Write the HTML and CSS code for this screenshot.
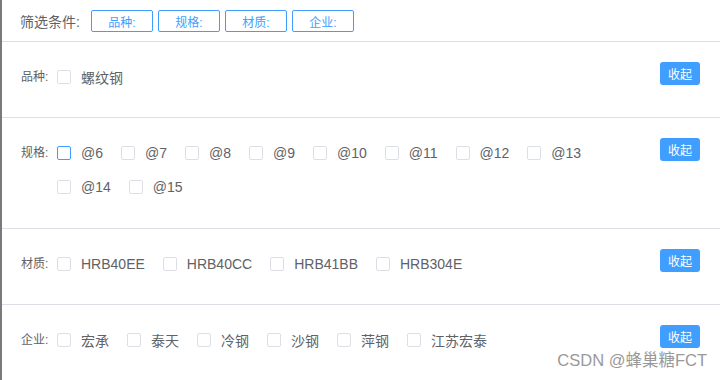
FILE: index.html
```html
<!DOCTYPE html>
<html lang="zh-CN">
<head>
<meta charset="utf-8">
<title>筛选条件</title>
<link rel="stylesheet" href="styles.css">
</head>
<body>
<div class="page">
  <div class="filter-head">
    <span class="head-label">筛选条件:</span>
    <span class="tag">品种:</span>
    <span class="tag">规格:</span>
    <span class="tag">材质:</span>
    <span class="tag">企业:</span>
  </div>

  <div class="section">
    <div class="sec-label">品种:</div>
    <div class="options">
      <label class="opt"><span class="box"></span><span class="txt">螺纹钢</span></label>
    </div>
    <button class="collapse">收起</button>
  </div>

  <div class="section section-wide">
    <div class="sec-label">规格:</div>
    <div class="options">
      <label class="opt"><span class="box box-focus"></span><span class="txt">@6</span></label>
      <label class="opt"><span class="box"></span><span class="txt">@7</span></label>
      <label class="opt"><span class="box"></span><span class="txt">@8</span></label>
      <label class="opt"><span class="box"></span><span class="txt">@9</span></label>
      <label class="opt"><span class="box"></span><span class="txt">@10</span></label>
      <label class="opt"><span class="box"></span><span class="txt">@11</span></label>
      <label class="opt"><span class="box"></span><span class="txt">@12</span></label>
      <label class="opt"><span class="box"></span><span class="txt">@13</span></label>
      <label class="opt"><span class="box"></span><span class="txt">@14</span></label>
      <label class="opt"><span class="box"></span><span class="txt">@15</span></label>
    </div>
    <button class="collapse">收起</button>
  </div>

  <div class="section">
    <div class="sec-label">材质:</div>
    <div class="options">
      <label class="opt"><span class="box"></span><span class="txt">HRB40EE</span></label>
      <label class="opt"><span class="box"></span><span class="txt">HRB40CC</span></label>
      <label class="opt"><span class="box"></span><span class="txt">HRB41BB</span></label>
      <label class="opt"><span class="box"></span><span class="txt">HRB304E</span></label>
    </div>
    <button class="collapse">收起</button>
  </div>

  <div class="section section-last">
    <div class="sec-label">企业:</div>
    <div class="options">
      <label class="opt"><span class="box"></span><span class="txt">宏承</span></label>
      <label class="opt"><span class="box"></span><span class="txt">泰天</span></label>
      <label class="opt"><span class="box"></span><span class="txt">冷钢</span></label>
      <label class="opt"><span class="box"></span><span class="txt">沙钢</span></label>
      <label class="opt"><span class="box"></span><span class="txt">萍钢</span></label>
      <label class="opt"><span class="box"></span><span class="txt">江苏宏泰</span></label>
    </div>
    <button class="collapse">收起</button>
  </div>

  <div class="watermark">CSDN @蜂巢糖FCT</div>
</div>
</body>
</html>
```

FILE: styles.css
```css
* { box-sizing: border-box; }

html, body {
  margin: 0;
  padding: 0;
  background: #fff;
}

body {
  font-family: "Liberation Sans", "Noto Sans CJK SC", sans-serif;
  color: #606266;
}

.page {
  position: relative;
  width: 720px;
  height: 380px;
  border-left: 2px solid #7a7a7a;
  overflow: hidden;
}

.filter-head {
  display: flex;
  align-items: center;
  gap: 5px;
  height: 42px;
  padding: 1px 0 0 18px;
  border-bottom: 1px solid #dcdfe6;
}

.head-label {
  font-size: 14px;
  margin-right: 6px;
}

.tag {
  display: inline-flex;
  align-items: center;
  justify-content: center;
  height: 22px;
  width: 62px;
  border: 1px solid #409eff;
  border-radius: 2px;
  color: #409eff;
  font-size: 12px;
}

.section {
  display: flex;
  align-items: flex-start;
  padding: 17px 20px 24px 19px;
  border-bottom: 1px solid #dcdfe6;
}

.section-wide {
  padding-bottom: 25px;
}

.section-last {
  border-bottom: none;
}

.sec-label {
  width: 36px;
  height: 34px;
  flex: none;
  font-size: 12px;
  line-height: 34px;
  padding-top: 1px;
}

.options {
  flex: 1;
  display: flex;
  flex-wrap: wrap;
}

.opt {
  display: flex;
  align-items: center;
  height: 34px;
  margin-right: 18px;
  font-size: 14px;
  padding-top: 1px;
}

.box {
  width: 14px;
  height: 14px;
  border: 1px solid #dcdfe6;
  border-radius: 2px;
  margin-right: 10px;
  background: #fff;
}

.box-focus {
  border-color: #409eff;
}

.collapse {
  flex: none;
  margin-top: 3px;
  width: 40px;
  height: 23px;
  padding: 0;
  border: none;
  border-radius: 3px;
  background: #409eff;
  color: #fff;
  font-family: "Noto Sans CJK SC", sans-serif;
  font-size: 12px;
  line-height: 23px;
}

.watermark {
  position: absolute;
  right: 13px;
  bottom: 9px;
  font-size: 16.5px;
  color: #999;
}
```
